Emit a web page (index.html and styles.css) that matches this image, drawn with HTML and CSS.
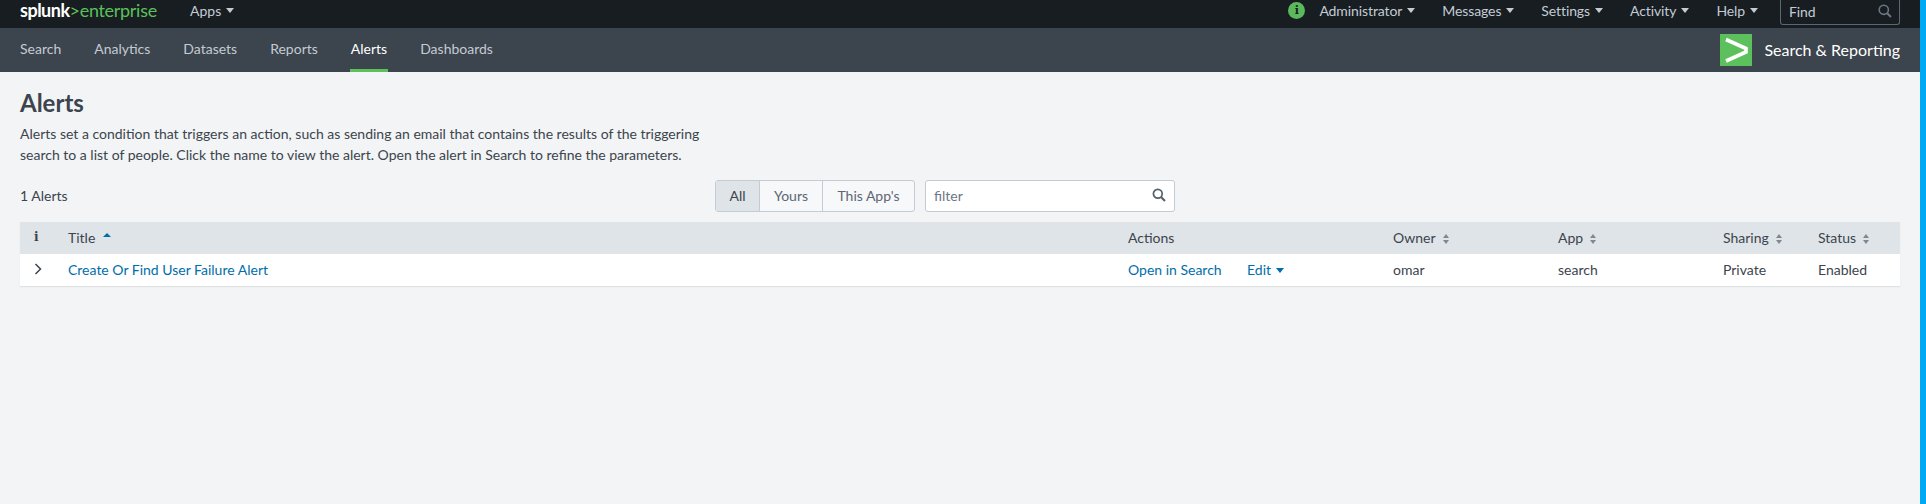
FILE: index.html
```html
<!DOCTYPE html>
<html lang="en">
<head>
<meta charset="utf-8">
<title>Alerts</title>
<link rel="stylesheet" href="styles.css">
</head>
<body>
<div class="shell">
  <div class="page">
    <header class="topbar">
      <div class="topbar-left">
        <a class="logo"><span class="logo-splunk">splunk</span><span class="logo-gt">&gt;</span><span class="logo-ent">enterprise</span></a>
        <a class="menu">Apps<i class="caret"></i></a>
      </div>
      <div class="topbar-right">
        <span class="status-dot">i</span>
        <a class="menu">Administrator<i class="caret"></i></a>
        <a class="menu">Messages<i class="caret"></i></a>
        <a class="menu">Settings<i class="caret"></i></a>
        <a class="menu">Activity<i class="caret"></i></a>
        <a class="menu">Help<i class="caret"></i></a>
        <div class="find">
          <span>Find</span>
          <svg class="find-icon" viewBox="0 0 14 14" width="14" height="14"><circle cx="5.8" cy="5.8" r="4.6" fill="none" stroke="#6b7785" stroke-width="1.6"/><path d="M9.2 9.2L13 13" stroke="#6b7785" stroke-width="2" fill="none"/></svg>
        </div>
      </div>
    </header>
    <nav class="appbar">
      <div class="tabs">
        <a class="tab">Search</a>
        <a class="tab">Analytics</a>
        <a class="tab">Datasets</a>
        <a class="tab">Reports</a>
        <a class="tab tab-active">Alerts</a>
        <a class="tab">Dashboards</a>
      </div>
      <div class="app-id">
        <svg class="app-logo" viewBox="0 0 32 32" width="32" height="32"><rect width="32" height="32" fill="#5cc05c"/><path d="M6 5.5L26 14.5V18L6 27" fill="none" stroke="#fff" stroke-width="3.6" stroke-linejoin="miter"/></svg>
        <span class="app-name">Search &amp; Reporting</span>
      </div>
    </nav>
    <main class="content">
      <h1 class="title">Alerts</h1>
      <p class="desc">Alerts set a condition that triggers an action, such as sending an email that contains the results of the triggering<br>search to a list of people. Click the name to view the alert. Open the alert in Search to refine the parameters.</p>
      <div class="controls">
        <div class="count">1 Alerts</div>
        <div class="btn-group">
          <a class="seg seg-all seg-active">All</a>
          <a class="seg seg-yours">Yours</a>
          <a class="seg seg-app">This App's</a>
        </div>
        <div class="filter">
          <span>filter</span>
          <svg viewBox="0 0 14 14" width="14" height="14"><circle cx="5.8" cy="5.8" r="4.4" fill="none" stroke="#56606b" stroke-width="1.7"/><path d="M9 9L13 13" stroke="#56606b" stroke-width="2.1" fill="none"/></svg>
        </div>
      </div>
      <table class="grid">
        <colgroup>
          <col class="c-i"><col class="c-title"><col class="c-actions"><col class="c-owner"><col class="c-app"><col class="c-sharing"><col class="c-status">
        </colgroup>
        <thead>
          <tr>
            <th class="cell-i">i</th>
            <th>Title<i class="sort-up"></i></th>
            <th>Actions</th>
            <th>Owner<i class="sort"></i></th>
            <th>App<i class="sort"></i></th>
            <th>Sharing<i class="sort"></i></th>
            <th>Status<i class="sort"></i></th>
          </tr>
        </thead>
        <tbody>
          <tr>
            <td class="cell-i"><svg viewBox="0 0 8 12" width="8" height="12"><path d="M1.5 1L6.5 6L1.5 11" fill="none" stroke="#3c444d" stroke-width="1.5"/></svg></td>
            <td><a class="link">Create Or Find User Failure Alert</a></td>
            <td><div class="actions"><a class="link link-open">Open in Search</a><a class="link">Edit<i class="caret caret-blue"></i></a></div></td>
            <td>omar</td>
            <td>search</td>
            <td>Private</td>
            <td>Enabled</td>
          </tr>
        </tbody>
      </table>
    </main>
  </div>
  <div class="strip"></div>
</div>
</body>
</html>
```

FILE: styles.css
```css
* { box-sizing: border-box; }
html, body { margin: 0; padding: 0; height: 100%; overflow: hidden; }
body { font-family: "Lato", "Liberation Sans", sans-serif; font-size: 14px; color: #3c444d; background: #f2f4f5; }
.shell { display: flex; height: 504px; }
.page { flex: 1; min-width: 0; display: flex; flex-direction: column; }
.strip { width: 6px; background: #00a9f4; }

.topbar { height: 28px; flex: none; background: #171d21; display: flex; justify-content: space-between; padding: 0 20px 7px; color: #c3cbd4; }
.topbar-left, .topbar-right { display: flex; align-items: center; }
.topbar-right { letter-spacing: -0.1px; }
.logo { display: flex; align-items: baseline; font-size: 18px; line-height: 21px; width: 170px; letter-spacing: -0.3px; }
.logo-splunk { color: #fff; font-weight: 700; letter-spacing: -0.5px; }
.logo-gt { color: #65c15b; }
.logo-ent { color: #5cc05c; }
.menu { display: flex; align-items: center; color: #c3cbd4; }
.topbar-right .menu { margin-right: 27px; }
.caret { display: inline-block; width: 0; height: 0; margin-left: 5px; border-left: 4px solid transparent; border-right: 4px solid transparent; border-top: 5px solid #c3cbd4; }
.caret-blue { border-top-color: #006eaa; vertical-align: 2px; }
.status-dot { width: 17px; height: 17px; border-radius: 50%; background: #5cb85c; color: #171d21; font: 700 11px/17px "DejaVu Serif", serif; text-align: center; margin-right: 14px; }
.find { width: 120px; height: 25px; align-self: flex-start; margin-left: -5px; border: 1px solid #5c6773; border-top: 0; border-radius: 0 0 3px 3px; display: flex; align-items: center; justify-content: space-between; padding: 0 7px 2px 8px; color: #c3cbd4; }

.appbar { height: 44px; flex: none; background: #3c444d; display: flex; justify-content: space-between; align-items: stretch; padding: 0 20px; }
.tabs { display: flex; gap: 31px; }
.tab { display: flex; align-items: center; padding: 0 1px; color: #c3cbd4; border-bottom: 3px solid transparent; }
.tab:first-child { padding-left: 0; }
.tab-active { color: #fff; border-bottom-color: #5cc05c; }
.app-id { display: flex; align-items: center; gap: 12px; }
.app-logo { display: block; }
.app-name { color: #fff; font-size: 16px; padding-bottom: 2px; }

.content { padding: 0 20px; flex: 1; }
.title { margin: 15px 0 0; font-size: 24px; line-height: 32px; font-weight: 700; color: #3c444d; }
.desc { margin: 5px 0 0; line-height: 20.5px; }
.controls { display: flex; align-items: center; height: 32px; margin-top: 15px; }
.count { width: 695px; padding-bottom: 2px; }
.btn-group { display: flex; height: 32px; border: 1px solid #c3cbd4; border-radius: 3px; background: #f7f8fa; }
.seg { display: flex; align-items: center; justify-content: center; padding-bottom: 2px; border-right: 1px solid #c3cbd4; color: #5c6773; }
.seg:last-child { border-right: 0; }
.seg-all { width: 44px; }
.seg-yours { width: 63px; }
.seg-app { width: 91px; }
.seg-active { background: #dfe4e8; color: #3c444d; }
.filter { width: 250px; height: 32px; margin-left: 10px; background: #fff; border: 1px solid #c3cbd4; border-radius: 3px; display: flex; align-items: center; justify-content: space-between; padding: 0 8px 2px; color: #6b7785; }

.grid { margin-top: 10px; width: 1880px; table-layout: fixed; border-collapse: collapse; box-shadow: 0 1px 1px rgba(0,0,0,.08); }
.c-i { width: 48px; } .c-title { width: 1060px; } .c-actions { width: 265px; } .c-owner { width: 165px; } .c-app { width: 165px; } .c-sharing { width: 95px; } .c-status { width: 82px; }
.grid th, .grid td { height: 32px; padding: 0 0 2px; text-align: left; font-weight: 400; }
.grid th { background: #dfe4e8; color: #3c444d; }
.grid td { background: #fff; }
.grid .cell-i { text-align: left; padding-left: 14px; font: 700 12px "DejaVu Serif", serif; }
.grid td.cell-i svg { display: block; }
.sort { display: inline-block; width: 7px; height: 10px; margin-left: 7px; vertical-align: -1px; position: relative; }
.sort::before, .sort::after { content: ""; position: absolute; left: 0; border-left: 3.5px solid transparent; border-right: 3.5px solid transparent; }
.sort::before { top: 0; border-bottom: 4px solid #7d8894; }
.sort::after { bottom: 0; border-top: 4px solid #7d8894; }
.sort-up { display: inline-block; margin-left: 8px; vertical-align: 6px; border-left: 4px solid transparent; border-right: 4px solid transparent; border-bottom: 4px solid #006eaa; }
.link { color: #006eaa; }
.actions { display: flex; align-items: center; }
.link-open { width: 119px; }
```
